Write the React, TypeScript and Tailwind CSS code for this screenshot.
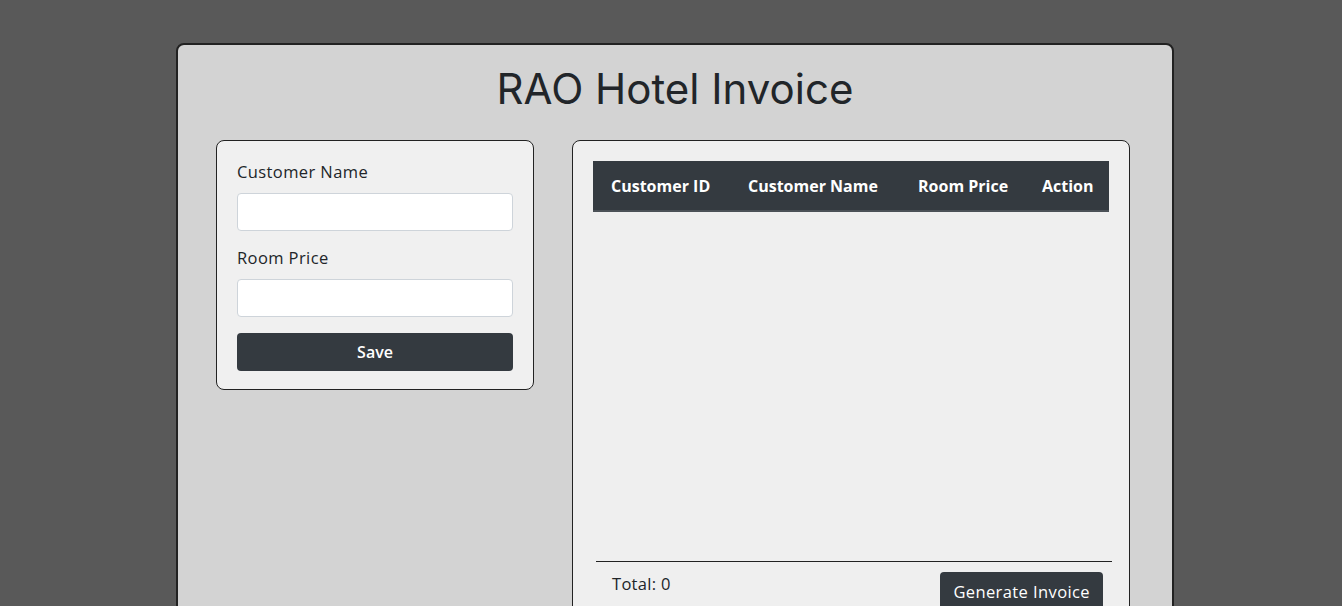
export default function App() {
  const font = { fontFamily: '"Open Sans", "Noto Sans", sans-serif' };
  return (
    <div className="min-h-[606px] h-[606px] overflow-hidden bg-[#595959] pt-[43px]" style={font}>
      <div className="ml-[176px] w-[998px] h-[620px] rounded-lg border-2 border-[#222] bg-[#d3d3d3] px-[38px]">
        <h1 className="text-center text-[42px] leading-none text-[#212529] pt-[23px] h-[95px]" style={{ fontFamily: 'Inter, "Open Sans", sans-serif' }}>
          RAO Hotel Invoice
        </h1>
        <div className="flex gap-[38px] items-start">
          <div className="w-[318px] rounded-lg border border-[#222] bg-[#f0f0f0] px-[20px] pt-[19px] pb-[18px]">
            <label className="block text-[16.5px] tracking-[0.4px] leading-[24px] text-[#212529]">Customer Name</label>
            <input className="mt-[9px] block w-full h-[38px] rounded bg-white border border-[#ced4da]" />
            <label className="block mt-[15px] text-[16.5px] tracking-[0.4px] leading-[24px] text-[#212529]">Room Price</label>
            <input className="mt-[9px] block w-full h-[38px] rounded bg-white border border-[#ced4da]" />
            <button className="mt-[16px] block w-full h-[38px] rounded bg-[#343a40] text-white font-semibold text-[16px]">Save</button>
          </div>
          <div className="w-[558px] h-[500px] rounded-lg border border-[#222] bg-[#efefef] pt-[20px] px-[20px] flex flex-col">
            <div className="flex h-[51px] bg-[#343a40] border-b-2 border-[#4b5157] text-white font-bold text-[16px] items-center">
              <div className="w-[136px] pl-[18px]">Customer ID</div>
              <div className="w-[170px] pl-[19px]">Customer Name</div>
              <div className="w-[126px] pl-[19px]">Room Price</div>
              <div className="w-[84px] pl-[17px]">Action</div>
            </div>
            <div className="h-[349px]"></div>
            <div className="ml-[3px] mr-[-3px] border-t border-[#222]"></div>
            <div className="flex justify-between items-start pl-[19px] pr-[6px]">
              <div className="mt-[10px] text-[16.5px] tracking-[0.3px] text-[#212529]">Total: 0</div>
              <button className="mt-[10px] h-[40px] px-[13px] rounded bg-[#343a40] text-white text-[16.5px] tracking-[0.4px]">Generate Invoice</button>
            </div>
          </div>
        </div>
      </div>
    </div>
  );
}
